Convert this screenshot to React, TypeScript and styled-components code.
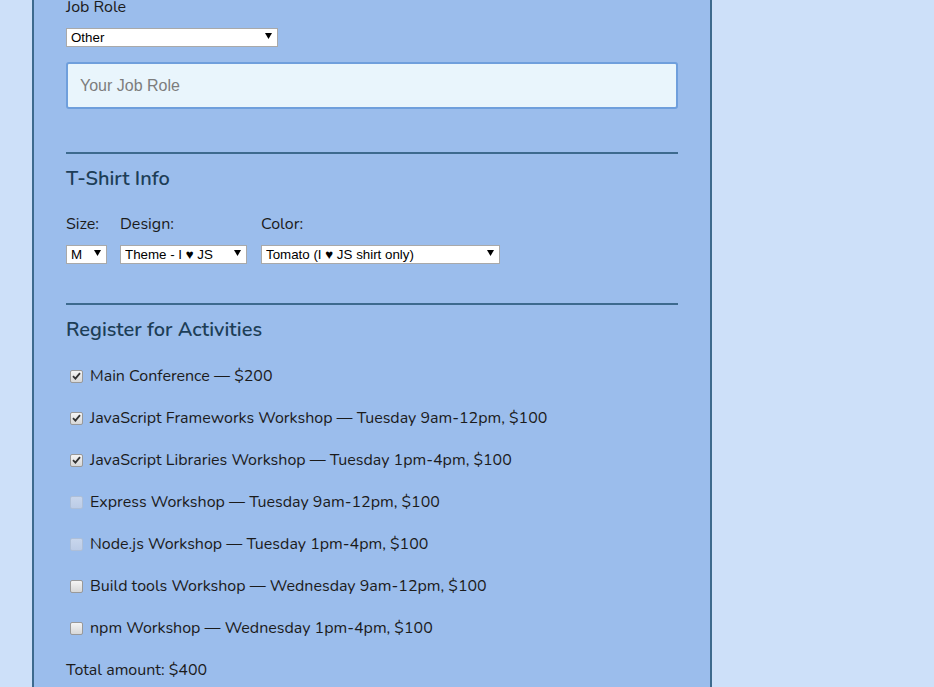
import React from "react";
import styled, { createGlobalStyle } from "styled-components";

const GlobalStyle = createGlobalStyle`
  html, body { margin: 0; padding: 0; }
  body {
    background: #cde0f9;
    font-family: "Nunito", "Lato", "Noto Sans", sans-serif;
    color: #1b1b1b;
    overflow: hidden;
  }
`;

const Page = styled.div`
  height: 687px;
  overflow: hidden;
`;

const Container = styled.form`
  margin-left: 32px;
  width: 612px;
  min-height: 700px;
  padding: 0 32px;
  background: #9bbdec;
  border-left: 2px solid #3d6a8e;
  border-right: 2px solid #3d6a8e;
`;

const Fieldset = styled.section<{ $top?: number }>`
  display: flex;
  flex-direction: column;
  padding-top: ${(p) => p.$top ?? 0}px;
`;

const Label = styled.label`
  display: block;
  font-size: 16px;
  line-height: 20px;
`;

const TopLabel = styled(Label)`
  margin-top: -3px;
  margin-bottom: 9px;
`;

const SelectWrap = styled.div<{ $w: number }>`
  position: relative;
  width: ${(p) => p.$w}px;
  height: 19px;
`;

const Select = styled.select`
  appearance: none;
  -webkit-appearance: none;
  width: 100%;
  height: 100%;
  margin: 0;
  padding: 0 0 0 4px;
  box-sizing: border-box;
  border: 1px solid #a9a9a9;
  border-radius: 0;
  background: #fff;
  font-family: "Liberation Sans", Arial, sans-serif;
  font-size: 13.33px;
  color: #000;
  outline: none;
`;

const Arrow = styled.svg`
  position: absolute;
  right: 6px;
  top: 6px;
  width: 7px;
  height: 7px;
  pointer-events: none;
`;

const TextInput = styled.input`
  box-sizing: border-box;
  width: 612px;
  height: 47px;
  margin-top: 17px;
  padding: 0 12px;
  border: 2px solid #6f9fdc;
  border-radius: 3px;
  background: #e9f5fc;
  font-family: "Liberation Sans", Arial, sans-serif;
  font-size: 16px;
  color: #333;
  outline: none;
  &::placeholder { color: #7d7d7d; }
`;

const Divider = styled.hr`
  margin: 0 0 13px;
  border: none;
  height: 2px;
  background: #3d6a8e;
`;

const Heading = styled.h2`
  margin: 0;
  font-size: 20px;
  font-weight: 600;
  line-height: 24px;
  color: #1d3e57;
`;

const ShirtRow = styled.div`
  display: flex;
  margin-top: 23px;
`;

const ShirtCol = styled.div<{ $gap: number }>`
  display: flex;
  flex-direction: column;
  gap: 9px;
  margin-right: ${(p) => p.$gap}px;
`;

const ActivityList = styled.div`
  display: flex;
  flex-direction: column;
  gap: 22px;
  margin-top: 24px;
`;

const ActivityRow = styled.label`
  display: flex;
  align-items: center;
  gap: 7px;
  font-size: 16px;
  line-height: 20px;
  padding-left: 4px;
`;

const Box = styled.span<{ $disabled?: boolean }>`
  box-sizing: border-box;
  width: 13px;
  height: 13px;
  border-radius: 2px;
  border: 1px solid ${(p) => (p.$disabled ? "#aebfd8" : "#999")};
  background: ${(p) =>
    p.$disabled
      ? "linear-gradient(#c8d6ec, #bccce7)"
      : "linear-gradient(#f4f4f4, #d8d8d8)"};
  display: flex;
  align-items: center;
  justify-content: center;
  flex-shrink: 0;
`;

const Total = styled.p`
  margin: 22px 0 0;
  font-size: 16px;
  line-height: 20px;
`;

function Dropdown({ w, value, options }: { w: number; value: string; options: string[] }) {
  return (
    <SelectWrap $w={w}>
      <Select defaultValue={value}>
        {options.map((o) => (
          <option key={o}>{o}</option>
        ))}
      </Select>
      <Arrow viewBox="0 0 7 7">
        <path d="M0 1 H7 L3.5 7 Z" fill="#000" />
      </Arrow>
    </SelectWrap>
  );
}

const activities: { text: string; checked?: boolean; disabled?: boolean }[] = [
  { text: "Main Conference — $200", checked: true },
  { text: "JavaScript Frameworks Workshop — Tuesday 9am-12pm, $100", checked: true },
  { text: "JavaScript Libraries Workshop — Tuesday 1pm-4pm, $100", checked: true },
  { text: "Express Workshop — Tuesday 9am-12pm, $100", disabled: true },
  { text: "Node.js Workshop — Tuesday 1pm-4pm, $100", disabled: true },
  { text: "Build tools Workshop — Wednesday 9am-12pm, $100" },
  { text: "npm Workshop — Wednesday 1pm-4pm, $100" },
];

export default function App() {
  return (
    <Page>
      <GlobalStyle />
      <Container>
        <Fieldset>
          <TopLabel>Job Role</TopLabel>
          <Dropdown w={212} value="Other" options={["Other"]} />
          <TextInput placeholder="Your Job Role" />
        </Fieldset>
        <Fieldset $top={43}>
          <Divider />
          <Heading>T-Shirt Info</Heading>
          <ShirtRow>
            <ShirtCol $gap={13}>
              <Label>Size:</Label>
              <Dropdown w={41} value="M" options={["M"]} />
            </ShirtCol>
            <ShirtCol $gap={14}>
              <Label>Design:</Label>
              <Dropdown w={127} value="Theme - I ♥ JS" options={["Theme - I ♥ JS"]} />
            </ShirtCol>
            <ShirtCol $gap={0}>
              <Label>Color:</Label>
              <Dropdown w={239} value="Tomato (I ♥ JS shirt only)" options={["Tomato (I ♥ JS shirt only)"]} />
            </ShirtCol>
          </ShirtRow>
        </Fieldset>
        <Fieldset $top={41}>
          <Divider />
          <Heading>Register for Activities</Heading>
          <ActivityList>
            {activities.map((a) => (
              <ActivityRow key={a.text}>
                <Box $disabled={a.disabled}>
                  {a.checked && (
                    <svg width="9" height="8" viewBox="0 0 9 8">
                      <path d="M1 4.2 L3.4 6.6 L8 1.2" stroke="#333" strokeWidth="1.8" fill="none" />
                    </svg>
                  )}
                </Box>
                {a.text}
              </ActivityRow>
            ))}
          </ActivityList>
          <Total>Total amount: $400</Total>
        </Fieldset>
      </Container>
    </Page>
  );
}
